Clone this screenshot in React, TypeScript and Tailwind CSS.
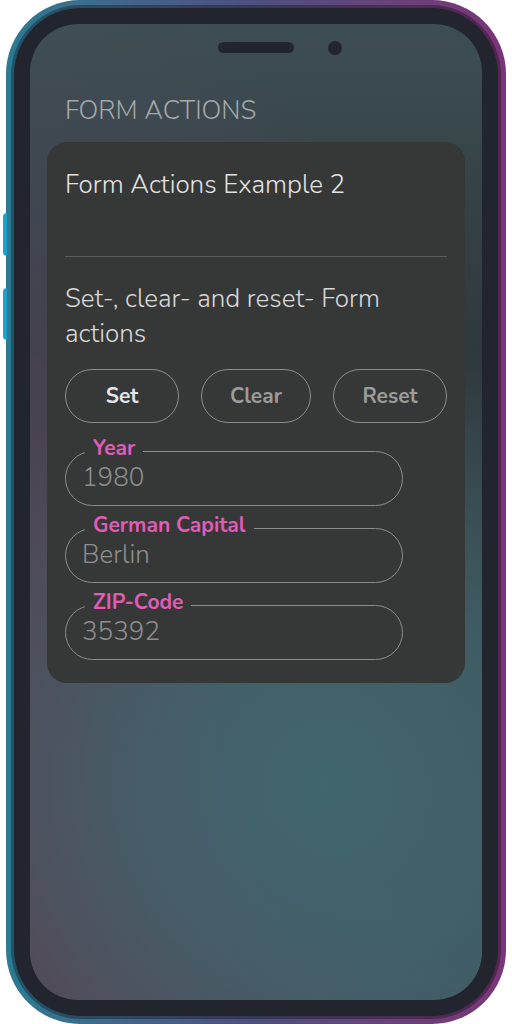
import React from 'react';

const font = { fontFamily: 'Nunito, Lato, "Noto Sans", sans-serif' };

const fields = [
  { label: 'Year', value: '1980' },
  { label: 'German Capital', value: 'Berlin' },
  { label: 'ZIP-Code', value: '35392' },
];

function OutlinedField({ label, value }: { label: string; value: string }) {
  return (
    <fieldset className="w-[338px] h-[71px] rounded-full border border-[#8d8d8d] pl-[16px] pr-4 m-0">
      <legend className="ml-[3px] px-2 pb-[6px] text-[21px] leading-[26px] font-bold text-[#e25cb7]">{label}</legend>
      <input
        readOnly
        value={value}
        className="block w-full bg-transparent outline-none text-[26px] leading-[30px] font-light text-[#8e8e8e] -mt-[4px]"
        style={font}
      />
    </fieldset>
  );
}

export default function App() {
  return (
    <div className="relative w-[512px] h-[1024px] bg-white" style={font}>
      {/* side buttons */}
      <div className="absolute left-[3px] top-[213px] w-[4px] h-[43px] rounded-l-sm bg-[#1aa3cf]" />
      <div className="absolute left-[3px] top-[288px] w-[4px] h-[52px] rounded-l-sm bg-[#1aa3cf]" />

      <div className="ml-[6px] w-[500px] h-[1024px] rounded-[74px] bg-gradient-to-r from-[#2b7a93] via-[#4d4f7c] to-[#7a3477] p-[5px]">
        <div className="h-full rounded-[70px] bg-black/30 p-[3px]">
          <div className="h-full rounded-[67px] bg-[#22252d] p-[16px]">
            <div className="relative h-full rounded-[48px] overflow-hidden bg-[radial-gradient(circle_at_65%_78%,#41666e_0%,rgba(65,102,110,0.7)_25%,rgba(65,102,110,0)_55%),radial-gradient(ellipse_at_0%_100%,#5a4051_0%,rgba(88,66,84,0.9)_28%,rgba(80,76,98,0.45)_55%,rgba(80,76,98,0)_78%),linear-gradient(180deg,#3d4e52_0%,#2f393b_33%,#37434a_62%,#3f5158_100%)]">
              {/* speaker + camera */}
              <div className="flex justify-center pt-[18px]">
                <div className="w-[76px] h-[11px] rounded-full bg-[#22252d]" />
              </div>
              <div className="absolute left-[298px] top-[17px] w-[14px] h-[14px] rounded-full bg-[#22252d]" />

              <h1 className="mt-[41px] ml-[35px] text-[26px] leading-[34px] font-light text-[#a3a8a8]">
                FORM ACTIONS
              </h1>

              <div className="mx-[17px] mt-[14px] rounded-[20px] bg-[#363737] px-[18px] pt-[27px] pb-[23px]">
                <h2 className="text-[26px] leading-[32px] font-light text-[#e2e2e2]">Form Actions Example 2</h2>
                <div className="mt-[55px] h-px bg-[#5c5c5c]" />
                <p className="mt-[24px] text-[26px] leading-[35px] font-light text-[#d8d8d8]">
                  Set-, clear- and reset- Form actions
                </p>

                <div className="mt-[18px] flex justify-between">
                  <button className="w-[114px] h-[54px] pt-[2px] rounded-full border border-[#8d8d8d] text-[21px] font-bold text-[#e6e6e6]">
                    Set
                  </button>
                  <button className="w-[110px] h-[54px] pt-[2px] rounded-full border border-[#8d8d8d] text-[21px] font-bold text-[#9c9c9c]">
                    Clear
                  </button>
                  <button className="w-[114px] h-[54px] pt-[2px] rounded-full border border-[#8d8d8d] text-[21px] font-bold text-[#9c9c9c]">
                    Reset
                  </button>
                </div>

                <div className="mt-[12px] flex flex-col gap-[6px]">
                  {fields.map(f => (
                    <OutlinedField key={f.label} label={f.label} value={f.value} />
                  ))}
                </div>
              </div>
            </div>
          </div>
        </div>
      </div>
    </div>
  );
}
